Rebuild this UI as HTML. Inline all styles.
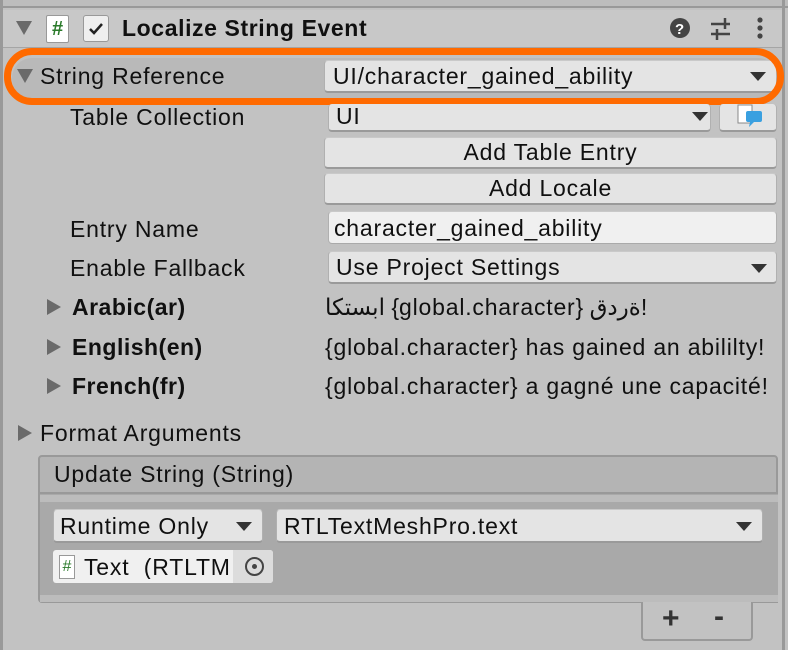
<!DOCTYPE html>
<html><head><meta charset="utf-8"><style>
*{margin:0;padding:0;box-sizing:border-box}
body{width:788px;height:650px;background:#c2c2c2;font-family:"Liberation Sans","DejaVu Sans",sans-serif;font-size:23px;letter-spacing:0.8px;color:#101010;position:relative;overflow:hidden}
.a{position:absolute;white-space:nowrap}
.t{line-height:1}
.fld{position:absolute;background:#e4e4e4;border-radius:4px;border-bottom:2px solid #9a9a9a;border-left:1px solid #b0b0b0;border-right:1px solid #b0b0b0;border-top:1px solid #c9c9c9}
.txt{background:#f0f0f0}
.dd{position:absolute;width:0;height:0;border-left:8px solid transparent;border-right:8px solid transparent;border-top:9px solid #333}
.tri{position:absolute;width:0;height:0;border-top:8px solid transparent;border-bottom:8px solid transparent;border-left:14px solid #6a6a6a}
.trd{position:absolute;width:0;height:0;border-left:8px solid transparent;border-right:8px solid transparent;border-top:14px solid #6a6a6a}
.b{font-weight:bold;letter-spacing:0.5px}
</style></head><body>
<div class="a" style="left:0;top:0;width:788px;height:8px;background:#bdbdbd;border-bottom:2px solid #999"></div>
<div class="a" style="left:0;top:0;width:3px;height:650px;background:#999"></div>
<div class="a" style="left:782px;top:0;width:3px;height:650px;background:#999"></div>
<div class="a" style="left:3px;top:10px;width:779px;height:38px;background:#c8c8c8;border-bottom:1px solid #a5a5a5"></div>
<div class="trd" style="left:16px;top:21px"></div>
<div class="a" style="left:46px;top:15px;width:23px;height:28px;background:#fff;border:1px solid #999;border-radius:2px;color:#2a7a2a;font-size:20px;font-weight:bold;text-align:center;line-height:26px;letter-spacing:0">#</div>
<div class="a" style="left:83px;top:15px;width:26px;height:27px;background:#efefef;border:1px solid #999;border-radius:3px"><svg width="24" height="25"><path d="M6 13 L10 17 L18 8" stroke="#222" stroke-width="2.5" fill="none"/></svg></div>
<div class="a t b" style="left:122px;top:17px;font-size:23px;letter-spacing:0.6px">Localize String Event</div>
<svg class="a" style="left:668px;top:15px" width="110" height="28">
<circle cx="12" cy="13" r="10" fill="#444"/><text x="12" y="19" font-size="15" font-weight="bold" fill="#fff" text-anchor="middle" font-family="Liberation Sans">?</text>
<g stroke="#444" stroke-width="2.5"><line x1="43" y1="9" x2="62" y2="9"/><line x1="43" y1="19" x2="62" y2="19"/><line x1="57" y1="3" x2="57" y2="14"/><line x1="49" y1="14" x2="49" y2="25"/></g>
<circle cx="92" cy="5" r="2.6" fill="#444"/><circle cx="92" cy="13" r="2.6" fill="#444"/><circle cx="92" cy="21" r="2.6" fill="#444"/>
</svg>
<div class="a" style="left:12px;top:58px;width:766px;height:41px;background:#b9b9b9;border-radius:20px"></div>
<div class="trd" style="left:17px;top:69px"></div>
<div class="a t" style="left:40px;top:65px">String Reference</div>
<div class="fld" style="left:324px;top:60px;width:453px;height:33px"></div>
<div class="a t" style="left:333px;top:65px">UI/character_gained_ability</div>
<div class="dd" style="left:750px;top:72px"></div>
<div class="a" style="left:4px;top:48px;width:780px;height:57px;border:7px solid #ff6a00;border-radius:28px"></div>
<div class="fld" style="left:328px;top:104px;width:383px;height:28px;border-top:none"></div>
<div class="a t" style="left:70px;top:106px">Table Collection</div>
<div class="a t" style="left:336px;top:105px">UI</div>
<div class="dd" style="left:692px;top:112px"></div>
<div class="fld" style="left:719px;top:104px;width:58px;height:28px;border-top:none"></div>
<svg class="a" style="left:736px;top:103px" width="28" height="24"><rect x="2" y="2" width="14" height="18" fill="#fff" stroke="#888"/><rect x="10" y="8" width="16" height="11" rx="2" fill="#3aa0e0"/><path d="M14 19 L13 24 L18 19Z" fill="#3aa0e0"/></svg>
<div class="fld" style="left:324px;top:137px;width:453px;height:32px"></div>
<div class="a t" style="left:324px;top:141px;width:453px;text-align:center">Add Table Entry</div>
<div class="fld" style="left:324px;top:173px;width:453px;height:32px"></div>
<div class="a t" style="left:324px;top:177px;width:453px;text-align:center">Add Locale</div>
<div class="a t" style="left:70px;top:218px">Entry Name</div>
<div class="fld txt" style="left:328px;top:211px;width:449px;height:33px;border-bottom:1px solid #aaa"></div>
<div class="a t" style="left:334px;top:217px">character_gained_ability</div>
<div class="a t" style="left:70px;top:257px">Enable Fallback</div>
<div class="fld" style="left:328px;top:251px;width:449px;height:33px"></div>
<div class="a t" style="left:336px;top:256px">Use Project Settings</div>
<div class="dd" style="left:751px;top:264px"></div>
<div class="tri" style="left:47px;top:299px"></div>
<div class="a t b" style="left:72px;top:296px">Arabic(ar)</div>
<div class="a t" style="left:325px;top:296px">ابستكا {global.character} ةردق!</div>
<div class="tri" style="left:47px;top:339px"></div>
<div class="a t b" style="left:72px;top:336px">English(en)</div>
<div class="a t" style="left:325px;top:336px">{global.character} has gained an abililty!</div>
<div class="tri" style="left:47px;top:378px"></div>
<div class="a t b" style="left:72px;top:375px">French(fr)</div>
<div class="a t" style="left:325px;top:375px">{global.character} a gagné une capacité!</div>
<div class="tri" style="left:18px;top:425px"></div>
<div class="a t" style="left:40px;top:422px">Format Arguments</div>
<div class="a" style="left:38px;top:455px;width:740px;height:39px;background:#b4b4b4;border:2px solid #999;border-radius:4px 4px 0 0"></div>
<div class="a t" style="left:54px;top:463px">Update String (String)</div>
<div class="a" style="left:38px;top:494px;width:740px;height:109px;background:#a9a9a9;border:2px solid #999;border-top:none;border-right:none;border-radius:0 0 0 4px"></div>
<div class="a" style="left:40px;top:495px;width:738px;height:7px;background:#bcbcbc"></div>
<div class="a" style="left:40px;top:595px;width:738px;height:7px;background:#bcbcbc"></div>
<div class="fld" style="left:53px;top:509px;width:210px;height:34px"></div>
<div class="a t" style="left:60px;top:515px">Runtime Only</div>
<div class="dd" style="left:236px;top:522px"></div>
<div class="fld" style="left:276px;top:509px;width:487px;height:34px"></div>
<div class="a t" style="left:284px;top:515px">RTLTextMeshPro.text</div>
<div class="dd" style="left:736px;top:522px"></div>
<div class="a" style="left:53px;top:550px;width:220px;height:33px;background:#f0f0f0;border-radius:3px;overflow:hidden">
<div class="a" style="left:6px;top:5px;width:16px;height:24px;background:#fff;border:1px solid #999;color:#2a7a2a;font-size:16px;text-align:center;line-height:22px;letter-spacing:0">#</div>
<div class="a t" style="left:31px;top:6px;width:145px;overflow:hidden">Text&nbsp; (RTLTMP)</div>
<div class="a" style="left:180px;top:0;width:40px;height:33px;background:#dcdcdc"></div>
<div class="a" style="left:192px;top:7px;width:19px;height:19px;border:2px solid #444;border-radius:50%"></div>
<div class="a" style="left:199px;top:14px;width:5px;height:5px;background:#444;border-radius:50%"></div>
</div>
<div class="a" style="left:641px;top:602px;width:112px;height:39px;background:#c2c2c2;border:2px solid #999;border-top:none;border-radius:0 0 4px 4px"></div>
<div class="a b" style="left:662px;top:602px;font-size:30px;color:#333">+</div>
<div class="a b" style="left:714px;top:600px;font-size:30px;color:#333">-</div>
</body></html>
